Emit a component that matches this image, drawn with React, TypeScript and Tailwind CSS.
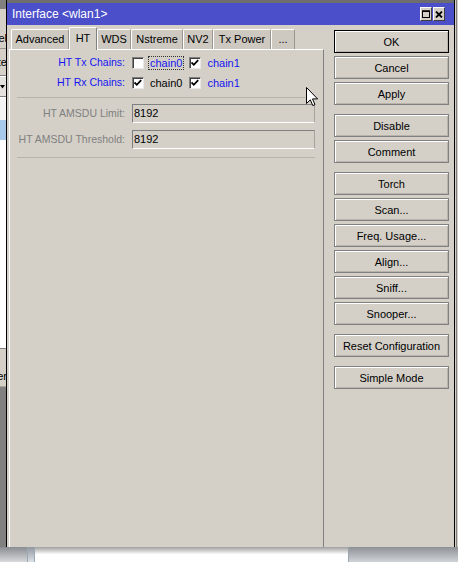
import React from "react";

const Btn = ({ label, def, mt }: { label: string; def?: boolean; mt: string }) => (
  <div
    className={`${mt} h-[23px] w-[115px] flex items-center justify-center pt-[1px] text-[11px] text-black border ${
      def ? "border-black" : "border-[#808080]"
    } shadow-[inset_1px_1px_0_#ffffff,inset_-1px_-1px_0_#b8b4ac] bg-[#d4d0c8]`}
  >
    {label}
  </div>
);

const Check = ({ on }: { on?: boolean }) => (
  <div className="w-[12px] h-[12px] bg-white border border-t-[#808080] border-l-[#808080] border-b-[#e8e8e8] border-r-[#e8e8e8] shadow-[inset_1px_1px_0_#404040] flex items-center justify-center shrink-0">
    {on && (
      <svg width="8" height="8" viewBox="0 0 8 8">
        <path d="M0.5 3.5 L2.8 5.8 L7.2 1.2" stroke="#000" strokeWidth="1.8" fill="none" />
      </svg>
    )}
  </div>
);

const Tab = ({ label, w, sel }: { label: string; w: string; sel?: boolean }) =>
  sel ? (
    <div
      className={`${w} h-[23px] relative z-10 mb-[-1px] bg-[#d4d0c8] border-t border-l border-white border-r border-r-[#808080] rounded-t-[2px] flex items-center justify-center text-[11px] text-black pb-[2px]`}
    >
      {label}
    </div>
  ) : (
    <div
      className={`${w} h-[20px] bg-[#cdc9c1] border-t border-l border-white border-r border-r-[#9a968e] rounded-t-[2px] flex items-center justify-center text-[11px] text-black`}
    >
      {label}
    </div>
  );

export default function App() {
  return (
    <div className="relative w-[458px] h-[562px] overflow-hidden flex flex-col bg-[#d4d0c8] font-['Liberation_Sans',Arial,sans-serif] select-none">
      <div className="flex flex-row h-[547px]">
        {/* left background strip */}
        <div className="w-[6px] flex flex-col overflow-hidden">
          <div className="h-[9px] bg-[#808080]" />
          <div className="h-[39px] bg-[#d4d0c8] flex items-end justify-end pb-[2px] text-[11px] whitespace-nowrap">
            <span className="mr-[-1px]">el</span>
          </div>
          <div className="h-px bg-[#9a968e]" />
          <div className="h-[26px] bg-[#d4d0c8] flex items-center justify-end text-[11px] whitespace-nowrap">
            <span className="mr-[-1px]">te</span>
          </div>
          <div className="h-px bg-[#808080]" />
          <div className="h-px bg-white" />
          <div className="h-[19px] bg-[#e4e2de] flex items-center justify-end pr-[1px]">
            <svg width="5" height="4" viewBox="0 0 5 4">
              <path d="M0 0 H5 L2.5 3.5 Z" fill="#000" />
            </svg>
          </div>
          <div className="h-px bg-[#808080]" />
          <div className="h-px bg-white" />
          <div className="h-[22px] bg-[#f4f4f4]" />
          <div className="h-[20px] bg-[#a8c8ec]" />
          <div className="h-[208px] bg-white" />
          <div className="h-px bg-[#808080]" />
          <div className="h-[37px] bg-[#d4d0c8] flex items-end justify-end pb-[2px] text-[11px] whitespace-nowrap">
            <span className="mr-[-1px]">er</span>
          </div>
          <div className="h-px bg-[#a8a49c]" />
          <div className="flex-1 bg-[#808080]" />
        </div>

        {/* window */}
        <div className="w-[449px] flex flex-col border-l border-r border-black bg-[#d4d0c8]">
          <div className="h-[3px] bg-[#6e6e6e]" />
          <div className="h-[22px] bg-[#4b4fca] flex items-center justify-between pl-[5px] pr-[9px]">
            <span className="text-white text-[12px] leading-none">Interface &lt;wlan1&gt;</span>
            <div className="flex flex-row">
              <div className="w-[12px] h-[14px] bg-[#d4d0c8] border border-t-white border-l-white border-b-[#404040] border-r-[#404040] flex items-center justify-center">
                <svg width="8" height="8" viewBox="0 0 8 8">
                  <rect x="0.5" y="1" width="7" height="6.5" fill="none" stroke="#000" strokeWidth="1" />
                  <rect x="0" y="0.5" width="8" height="1.5" fill="#000" />
                </svg>
              </div>
              <div className="w-[12px] h-[14px] ml-px bg-[#d4d0c8] border border-t-white border-l-white border-b-[#404040] border-r-[#404040] flex items-center justify-center">
                <svg width="8" height="7" viewBox="0 0 8 7">
                  <path d="M1 0.5 L7 6.5 M7 0.5 L1 6.5" stroke="#000" strokeWidth="1.8" />
                </svg>
              </div>
            </div>
          </div>

          <div className="flex-1 flex flex-row">
            {/* left column */}
            <div className="w-[317px] flex flex-col pl-[2px]">
              <div className="h-[24px] flex flex-row items-end ml-[2px]">
                <Tab label="Advanced" w="w-[58px]" />
                <Tab label="HT" w="w-[28px]" sel />
                <Tab label="WDS" w="w-[34px]" />
                <Tab label="Nstreme" w="w-[52px]" />
                <Tab label="NV2" w="w-[30px]" />
                <Tab label="Tx Power" w="w-[58px]" />
                <Tab label="..." w="w-[24px]" />
              </div>
              <div className="flex-1 border-t border-l border-white border-r border-r-[#808080] flex flex-col pt-[3px] text-[11px]">
                <div className="h-[20px] flex flex-row items-center">
                  <div className="w-[115px] text-right text-[#1414f0] text-[10.5px]">HT Tx Chains:</div>
                  <div className="ml-[7px]"><Check /></div>
                  <div className="ml-[4px] border border-dotted border-[#333] px-[1px] leading-[12px] text-[#1414f0]">chain0</div>
                  <div className="ml-[5px]"><Check on /></div>
                  <div className="ml-[6px] text-[#1414f0]">chain1</div>
                </div>
                <div className="h-[20px] flex flex-row items-center">
                  <div className="w-[115px] text-right text-[#1414f0] text-[10.5px]">HT Rx Chains:</div>
                  <div className="ml-[7px]"><Check on /></div>
                  <div className="ml-[6px] text-black">chain0</div>
                  <div className="ml-[7px]"><Check on /></div>
                  <div className="ml-[6px] text-[#1414f0]">chain1</div>
                </div>
                <div className="mt-[4px] ml-[7px] w-[298px] h-px bg-[#b8b4ac]" />
                <div className="mt-[6px] h-[19px] flex flex-row items-center">
                  <div className="w-[115px] text-right text-[#808080] text-[10.5px]">HT AMSDU Limit:</div>
                  <div className="ml-[7px] w-[183px] h-[19px] border border-t-[#808080] border-l-[#808080] border-b-white border-r-[#a8a49c] flex items-center pl-[1px] text-black">8192</div>
                </div>
                <div className="mt-[7px] h-[19px] flex flex-row items-center">
                  <div className="w-[115px] text-right text-[#808080] text-[10.5px]">HT AMSDU Threshold:</div>
                  <div className="ml-[7px] w-[183px] h-[19px] border border-t-[#808080] border-l-[#808080] border-b-white border-r-[#a8a49c] flex items-center pl-[1px] text-black">8192</div>
                </div>
                <div className="mt-[8px] ml-[7px] w-[298px] h-px bg-[#b8b4ac]" />
              </div>
            </div>

            {/* right column */}
            <div className="w-[130px] flex flex-col pl-[10px] pr-[5px] pt-[5px]">
              <Btn label="OK" def mt="mt-0" />
              <Btn label="Cancel" mt="mt-[3px]" />
              <Btn label="Apply" mt="mt-[3px]" />
              <Btn label="Disable" mt="mt-[9px]" />
              <Btn label="Comment" mt="mt-[3px]" />
              <Btn label="Torch" mt="mt-[9px]" />
              <Btn label="Scan..." mt="mt-[3px]" />
              <Btn label="Freq. Usage..." mt="mt-[3px]" />
              <Btn label="Align..." mt="mt-[3px]" />
              <Btn label="Sniff..." mt="mt-[3px]" />
              <Btn label="Snooper..." mt="mt-[3px]" />
              <Btn label="Reset Configuration" mt="mt-[9px]" />
              <Btn label="Simple Mode" mt="mt-[9px]" />
            </div>
          </div>
        </div>

        {/* right background strip */}
        <div className="flex-1 flex flex-row">
          <div className="w-px bg-[#d4d0c8]" />
          <div className="w-px bg-[#808080]" />
          <div className="flex-1 bg-[#d4d0c8]" />
        </div>
      </div>

      {/* bottom strip */}
      <div className="h-[15px] flex flex-row">
        <div className="w-[27px] bg-gradient-to-b from-[#8a8e92] to-[#d8dadc]" />
        <div className="w-px bg-[#9aa8b4]" />
        <div className="w-[6px] bg-gradient-to-b from-[#9296a0] to-[#dde2e8]" />
        <div className="w-px bg-[#9aa8b4]" />
        <div className="w-[313px] bg-gradient-to-b from-[#a0a0a0] via-white to-white" />
        <div className="w-px bg-[#9aa4ac]" />
        <div className="flex-1 bg-gradient-to-b from-[#8e9296] to-[#d0d4d8]" />
      </div>

      {/* mouse cursor */}
      <svg className="absolute left-[306px] top-[87px]" width="13" height="20" viewBox="0 0 13 20">
        <path
          d="M0.5 0.5 L0.5 16.5 L4.3 12.8 L6.8 18.6 L9 17.6 L6.5 11.9 L11.6 11.9 Z"
          fill="#fff"
          stroke="#000"
          strokeWidth="1"
          strokeLinejoin="miter"
        />
      </svg>
    </div>
  );
}
